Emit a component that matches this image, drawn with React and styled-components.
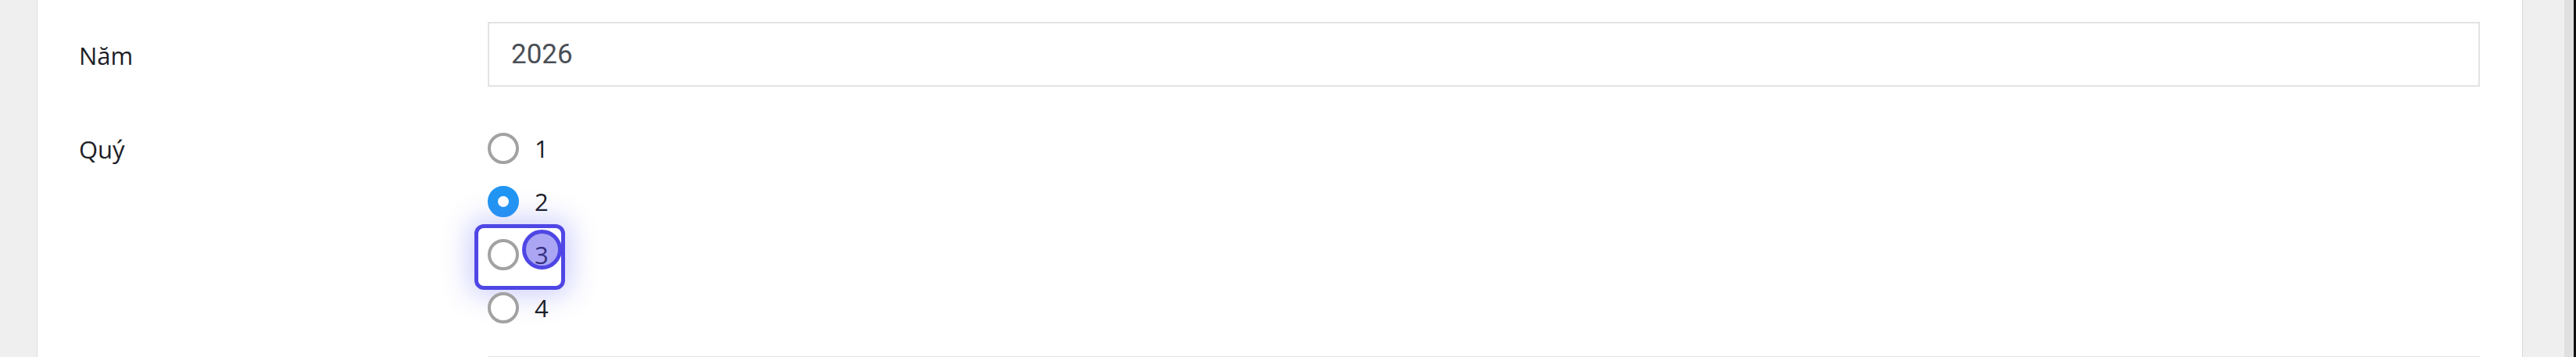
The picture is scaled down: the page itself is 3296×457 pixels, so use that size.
import React from "react";
import styled, { createGlobalStyle } from "styled-components";

const QUARTERS = [
  { value: "1" },
  { value: "2", checked: true },
  { value: "3", focused: true },
  { value: "4" }
];

const GlobalStyle = createGlobalStyle`
  html, body {
    margin: 0;
    padding: 0;
    background: #efefef;
    overflow: hidden;
  }
  * {
    box-sizing: border-box;
  }
`;

const Shell = styled.div`
  display: grid;
  grid-template-columns: 48px 1fr 54px 12px 3px;
  height: 457px;
  overflow: hidden;
`;

const LeftGutter = styled.div`
  background: #efefef;
  border-right: 1px solid #dddddd;
`;

const RightGutter = styled.div`
  background: #efefef;
  border-left: 1px solid #d9d9d9;
`;

const ScrollTrack = styled.div`
  background: #e0e0e0;
`;

const ScreenEdge = styled.div`
  background: #111;
`;

const Card = styled.div`
  background: #fff;
  padding: 28px 54px 0 53px;
  display: flex;
  flex-direction: column;
`;

const FormRow = styled.div`
  display: grid;
  grid-template-columns: 523px 1fr;
  align-items: ${props => (props.top ? "start" : "center")};
  margin-bottom: ${props => props.spacing || 0}px;
`;

const Label = styled.div`
  font-family: "Open Sans", "Noto Sans", sans-serif;
  font-size: 31px;
  color: #1c2026;
  line-height: 40px;
  padding-top: ${props => (props.top ? 1 : 3)}px;
`;

const TextInput = styled.input`
  display: block;
  width: 100%;
  height: 83px;
  border: 2px solid #e3e3e3;
  border-radius: 0;
  padding: 0 28px;
  font-family: Roboto, "Liberation Sans", sans-serif;
  font-size: 35px;
  color: #4a4f57;
  background: #fff;
  outline: none;
`;

const RadioList = styled.div`
  display: flex;
  flex-direction: column;
  gap: 28px;
`;

const Option = styled.label`
  position: relative;
  display: flex;
  align-items: center;
  gap: 20px;
  height: 40px;
  font-family: "Open Sans", "Noto Sans", sans-serif;
  font-size: 31px;
  line-height: 40px;
  color: #1c2026;
`;

const RadioCircle = styled.span`
  flex: none;
  width: 40px;
  height: 40px;
  border-radius: 50%;
  background: #fff;
  border: ${props => (props.checked ? "13px solid #2196f3" : "4px solid #a2a2a2")};
`;

const OptionText = styled.span`
  padding-top: 0;
`;

const FocusRing = styled.span`
  position: absolute;
  left: -17px;
  top: -19px;
  width: 116px;
  height: 84px;
  border: 5px solid #4f46e5;
  border-radius: 12px;
  box-shadow: 0 0 34px 8px rgba(99, 102, 241, 0.3);
  pointer-events: none;
`;

const ClickDot = styled.span`
  position: absolute;
  left: 44px;
  top: -12px;
  width: 51px;
  height: 51px;
  border-radius: 50%;
  border: 5px solid #4f46e5;
  background: rgba(79, 70, 229, 0.48);
  pointer-events: none;
`;

const App = () => (
  <>
    <GlobalStyle />
    <Shell>
      <LeftGutter />
      <Card>
        <FormRow spacing={59}>
          <Label>Năm</Label>
          <TextInput type="text" value="2026" readOnly />
        </FormRow>
        <FormRow top spacing={42}>
          <Label top>Quý</Label>
          <RadioList>
            {QUARTERS.map(q => (
              <Option key={q.value}>
                <RadioCircle checked={q.checked} />
                <OptionText>{q.value}</OptionText>
                {q.focused ? (
                  <>
                    <FocusRing />
                    <ClickDot />
                  </>
                ) : null}
              </Option>
            ))}
          </RadioList>
        </FormRow>
        <FormRow>
          <Label />
          <TextInput type="text" value="" readOnly />
        </FormRow>
      </Card>
      <RightGutter />
      <ScrollTrack />
      <ScreenEdge />
    </Shell>
  </>
);

export default App;
